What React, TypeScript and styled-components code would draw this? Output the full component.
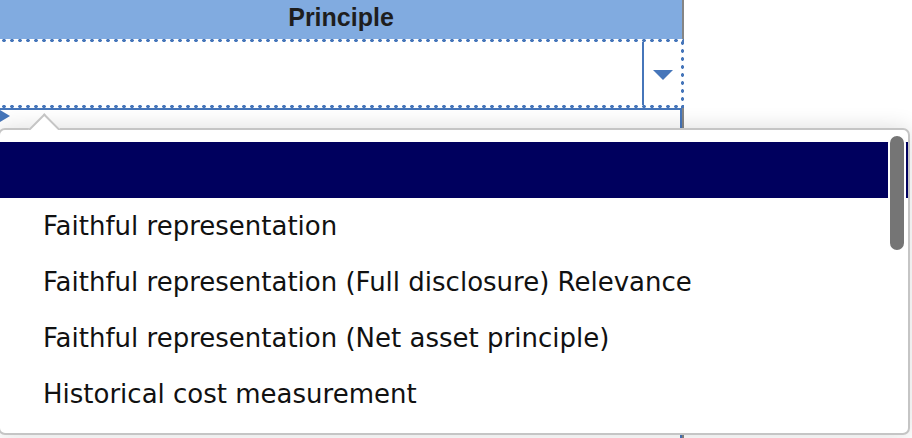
import styled, { createGlobalStyle } from 'styled-components';

const GlobalStyle = createGlobalStyle`
  html, body {
    margin: 0;
    padding: 0;
    background: #ffffff;
  }
`;

const options = [
  '',
  'Faithful representation',
  'Faithful representation (Full disclosure) Relevance',
  'Faithful representation (Net asset principle)',
  'Historical cost measurement',
];

export default function App() {
  return (
    <>
      <GlobalStyle />
      <Page>
        <Sheet>
          <Header>Principle</Header>
          <Cell>
            <InputArea />
            <DropButton>
              <DownArrow />
            </DropButton>
          </Cell>
          <NextCell>
            <RowMarker />
          </NextCell>
        </Sheet>

        <Popup>
          <Caret />
          {options.map((label, i) => (
            <Option key={i} selected={i === 0}>
              {label}
            </Option>
          ))}
          <Thumb />
        </Popup>
      </Page>
    </>
  );
}

const blue = '#4676ba';

const Page = styled.div`
  position: relative;
  width: 912px;
  height: 438px;
  overflow: hidden;
  background: #ffffff;
`;

const Sheet = styled.div`
  width: 684px;
  height: 100%;
  display: flex;
  flex-direction: column;
`;

const Header = styled.div`
  height: 39px;
  display: flex;
  align-items: center;
  justify-content: center;
  background: #81abe0;
  border-right: 2px solid #858585;
  font-family: 'Liberation Sans', Arial, sans-serif;
  font-weight: bold;
  font-size: 25px;
  color: #1e1e1e;
  padding-bottom: 4px;
  box-sizing: border-box;
`;

const Cell = styled.div`
  height: 69px;
  display: flex;
  padding: 3px 3px 3px 0;
  box-sizing: border-box;
  background:
    radial-gradient(circle at 4px 1.5px, ${blue} 1.5px, transparent 2px) 0 0 / 8px 3px repeat-x,
    radial-gradient(circle at 4px 1.5px, ${blue} 1.5px, transparent 2px) 0 100% / 8px 3px repeat-x,
    radial-gradient(circle at 1.5px 4px, ${blue} 1.5px, transparent 2px) 100% 0 / 3px 8px repeat-y,
    #ffffff;
`;

const InputArea = styled.div`
  flex: 1;
`;

const DropButton = styled.div`
  width: 39px;
  box-sizing: border-box;
  border-left: 2px solid ${blue};
  display: flex;
  align-items: center;
  justify-content: center;
`;

const DownArrow = styled.div`
  width: 0;
  height: 0;
  border-left: 10px solid transparent;
  border-right: 10px solid transparent;
  border-top: 10px solid ${blue};
  margin-top: 2px;
`;

const NextCell = styled.div`
  flex: 1;
  border-top: 2px solid ${blue};
  border-right: 2px solid ${blue};
  box-shadow: 2px 0 0 #858585;
  margin-right: 2px;
`;

const RowMarker = styled.div`
  width: 0;
  height: 0;
  border-top: 6px solid transparent;
  border-bottom: 6px solid transparent;
  border-left: 10px solid ${blue};
`;

const Popup = styled.div`
  position: absolute;
  top: 128px;
  left: -2px;
  width: 912px;
  height: 307px;
  box-sizing: border-box;
  border: 2px solid #c5c5c5;
  border-radius: 7px;
  background: #ffffff;
  padding-top: 12px;
  box-shadow: 0 0 22px rgba(0, 0, 0, 0.14);
`;

const Caret = styled.div`
  position: absolute;
  top: -17px;
  left: 28px;
  width: 32px;
  height: 17px;
  overflow: hidden;

  &::before {
    content: '';
    position: absolute;
    left: 4.7px;
    top: 4.7px;
    width: 22.6px;
    height: 22.6px;
    box-sizing: border-box;
    background: #ffffff;
    border-top: 2px solid #c5c5c5;
    border-left: 2px solid #c5c5c5;
    transform: rotate(45deg);
  }
`;

const Option = styled.div<{ selected?: boolean }>`
  height: 56px;
  display: flex;
  align-items: center;
  padding-left: 43px;
  font-family: 'DejaVu Sans', Verdana, sans-serif;
  font-size: 26px;
  color: #111111;
  white-space: nowrap;
  background: ${(p) => (p.selected ? '#00005e' : 'transparent')};
`;

const Thumb = styled.div`
  position: absolute;
  top: 4px;
  right: 2px;
  width: 18px;
  height: 118px;
  box-sizing: border-box;
  border: 2px solid #ffffff;
  border-radius: 9px;
  background: #757575;
`;
